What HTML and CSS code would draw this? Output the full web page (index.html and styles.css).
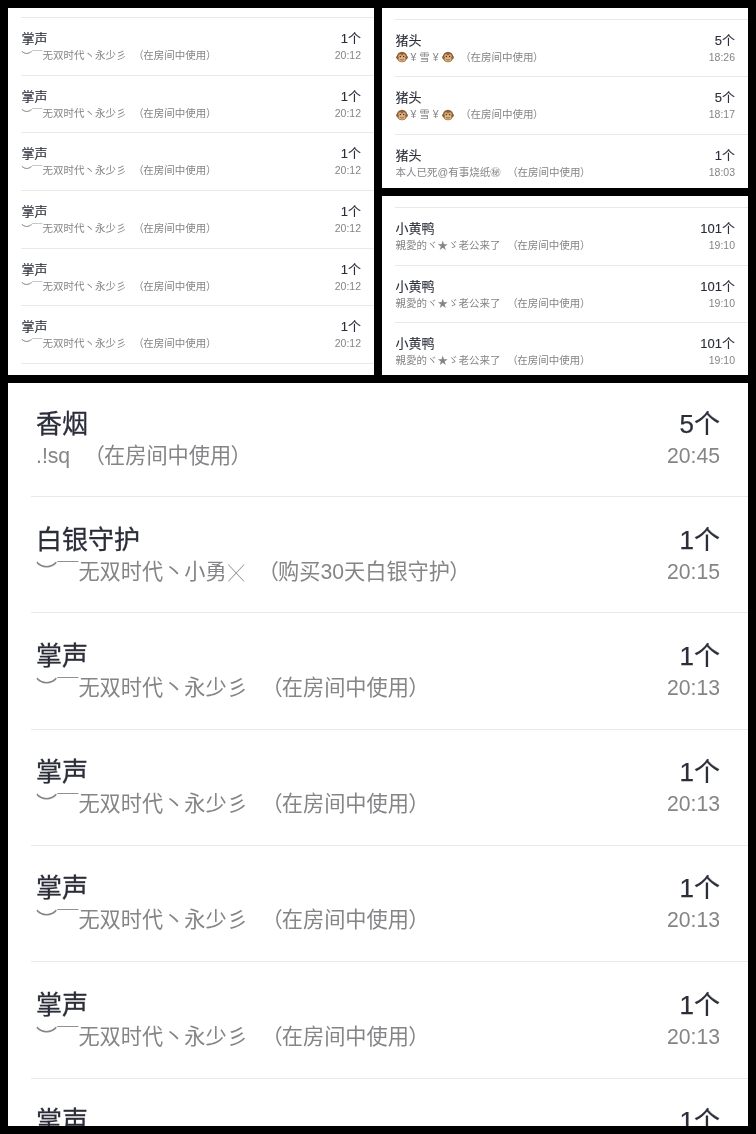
FILE: index.html
```html
<!DOCTYPE html>
<html lang="zh-CN">
<head>
<meta charset="utf-8">
<title>礼物记录</title>
<link rel="stylesheet" href="styles.css">
</head>
<body>
<svg width="0" height="0" class="defs"><defs>
<symbol id="monkey" viewBox="0 0 24 24">
<circle cx="2.8" cy="13" r="2.8" fill="#a06a3c"/><circle cx="21.2" cy="13" r="2.8" fill="#a06a3c"/>
<circle cx="12" cy="12" r="10.5" fill="#8e5f36"/>
<ellipse cx="8.3" cy="10.5" rx="3.6" ry="4" fill="#dcb081"/><ellipse cx="15.7" cy="10.5" rx="3.6" ry="4" fill="#dcb081"/>
<ellipse cx="12" cy="16.5" rx="7" ry="4.8" fill="#dcb081"/>
<circle cx="8.6" cy="11" r="1.3" fill="#3a2414"/><circle cx="15.4" cy="11" r="1.3" fill="#3a2414"/>
<path d="M8.5 17q3.5 2 7 0" fill="none" stroke="#5b3a20" stroke-width="1.1"/>
</symbol>
</defs></svg>
<main class="collage">
<section class="panel small left">
<div class="row"><div><p class="title">掌声</p><p class="sub"><span class="deco">︶￣</span>无双时代丶永少彡<span class="note">（在房间中使用）</span></p></div><div class="meta"><p class="count">1个</p><p class="time">20:12</p></div></div>
<div class="row"><div><p class="title">掌声</p><p class="sub"><span class="deco">︶￣</span>无双时代丶永少彡<span class="note">（在房间中使用）</span></p></div><div class="meta"><p class="count">1个</p><p class="time">20:12</p></div></div>
<div class="row"><div><p class="title">掌声</p><p class="sub"><span class="deco">︶￣</span>无双时代丶永少彡<span class="note">（在房间中使用）</span></p></div><div class="meta"><p class="count">1个</p><p class="time">20:12</p></div></div>
<div class="row"><div><p class="title">掌声</p><p class="sub"><span class="deco">︶￣</span>无双时代丶永少彡<span class="note">（在房间中使用）</span></p></div><div class="meta"><p class="count">1个</p><p class="time">20:12</p></div></div>
<div class="row"><div><p class="title">掌声</p><p class="sub"><span class="deco">︶￣</span>无双时代丶永少彡<span class="note">（在房间中使用）</span></p></div><div class="meta"><p class="count">1个</p><p class="time">20:12</p></div></div>
<div class="row"><div><p class="title">掌声</p><p class="sub"><span class="deco">︶￣</span>无双时代丶永少彡<span class="note">（在房间中使用）</span></p></div><div class="meta"><p class="count">1个</p><p class="time">20:12</p></div></div>
<div class="row"></div>
</section>
<section class="panel small pig">
<div class="row"><div><p class="title">猪头</p><p class="sub"><svg class="emoji"><use href="#monkey"/></svg><span class="name">¥雪¥</span><svg class="emoji"><use href="#monkey"/></svg><span class="note">（在房间中使用）</span></p></div><div class="meta"><p class="count">5个</p><p class="time">18:26</p></div></div>
<div class="row"><div><p class="title">猪头</p><p class="sub"><svg class="emoji"><use href="#monkey"/></svg><span class="name">¥雪¥</span><svg class="emoji"><use href="#monkey"/></svg><span class="note">（在房间中使用）</span></p></div><div class="meta"><p class="count">5个</p><p class="time">18:17</p></div></div>
<div class="row"><div><p class="title">猪头</p><p class="sub">本人已死@有事烧纸㊙<span class="note">（在房间中使用）</span></p></div><div class="meta"><p class="count">1个</p><p class="time">18:03</p></div></div>
</section>
<section class="panel small duck">
<div class="row"><div><p class="title">小黄鸭</p><p class="sub">親愛的ヾ★ゞ老公来了<span class="note">（在房间中使用）</span></p></div><div class="meta"><p class="count">101个</p><p class="time">19:10</p></div></div>
<div class="row"><div><p class="title">小黄鸭</p><p class="sub">親愛的ヾ★ゞ老公来了<span class="note">（在房间中使用）</span></p></div><div class="meta"><p class="count">101个</p><p class="time">19:10</p></div></div>
<div class="row"><div><p class="title">小黄鸭</p><p class="sub">親愛的ヾ★ゞ老公来了<span class="note">（在房间中使用）</span></p></div><div class="meta"><p class="count">101个</p><p class="time">19:10</p></div></div>
</section>
<section class="panel big">
<div class="row first"><div><p class="title">香烟</p><p class="sub">.!sq<span class="note">（在房间中使用）</span></p></div><div class="meta"><p class="count">5个</p><p class="time">20:45</p></div></div>
<div class="row"><div><p class="title">白银守护</p><p class="sub"><span class="deco">︶￣</span>无双时代丶小勇<span class="cross">╳</span><span class="note">（购买30天白银守护）</span></p></div><div class="meta"><p class="count">1个</p><p class="time">20:15</p></div></div>
<div class="row"><div><p class="title">掌声</p><p class="sub"><span class="deco">︶￣</span>无双时代丶永少彡<span class="note">（在房间中使用）</span></p></div><div class="meta"><p class="count">1个</p><p class="time">20:13</p></div></div>
<div class="row"><div><p class="title">掌声</p><p class="sub"><span class="deco">︶￣</span>无双时代丶永少彡<span class="note">（在房间中使用）</span></p></div><div class="meta"><p class="count">1个</p><p class="time">20:13</p></div></div>
<div class="row"><div><p class="title">掌声</p><p class="sub"><span class="deco">︶￣</span>无双时代丶永少彡<span class="note">（在房间中使用）</span></p></div><div class="meta"><p class="count">1个</p><p class="time">20:13</p></div></div>
<div class="row"><div><p class="title">掌声</p><p class="sub"><span class="deco">︶￣</span>无双时代丶永少彡<span class="note">（在房间中使用）</span></p></div><div class="meta"><p class="count">1个</p><p class="time">20:13</p></div></div>
<div class="row"><div><p class="title">掌声</p><p class="sub"><span class="deco">︶￣</span>无双时代丶永少彡<span class="note">（在房间中使用）</span></p></div><div class="meta"><p class="count">1个</p><p class="time">20:13</p></div></div>
</section>
</main>
</body>
</html>
```
FILE: styles.css
```css
* { box-sizing: border-box; }
html, body { margin: 0; height: 100%; }
body {
  background: #000;
  padding: 8px;
  overflow: hidden;
  font-family: "Liberation Sans", "Noto Sans CJK SC", sans-serif;
  color: #2b2e3a;
}
p { margin: 0; white-space: nowrap; }
.defs { display: block; height: 0; }
.collage {
  display: grid;
  grid-template-columns: 366px 366px;
  grid-template-rows: 179.5px 179.5px 743px;
  gap: 8px;
}
.panel { background: #fff; overflow: hidden; }
.left { grid-row: 1 / 3; }
.big { grid-column: 1 / 3; }

.row {
  display: flex;
  justify-content: space-between;
  border-top: 1px solid #e9e9ec;
}
.meta { text-align: right; }
.sub, .time { color: #858588; }
.title { -webkit-text-stroke: 0.3px #2b2e3a; }
.count { -webkit-text-stroke: 0.25px #2b2e3a; }
.small .title { -webkit-text-stroke: 0.12px #2b2e3a; }
.small .count { -webkit-text-stroke: 0.12px #2b2e3a; }
.note {
  margin-left: 1.1em;
  font-feature-settings: "palt";
}
.deco { vertical-align: -0.05em; line-height: 1; }
.cross { font-size: 0.75em; line-height: 1; margin-left: 0.1em; }
.name { margin: 0 0 0 3px; letter-spacing: 3px; }

.small { padding-top: 9px; }
.small.pig { padding-top: 10.5px; }
.small.duck { padding-top: 11.5px; }
.small .row {
  height: 57.67px;
  margin-left: 12.5px;
  padding: 13px 13px 0 1px;
}
.small .title, .small .count { font-size: 13px; line-height: 16px; }
.small .sub, .small .time { font-size: 10.5px; line-height: 16px; }
.emoji { width: 12px; height: 12px; vertical-align: -2.5px; }

.big .row {
  height: 116.33px;
  margin-left: 23px;
  padding: 27.5px 28px 0 5px;
}
.big .row.first {
  height: 113px;
  border-top: 0;
  padding-top: 25.5px;
}
.big .title, .big .count { font-size: 26px; line-height: 31px; }
.big .sub, .big .time { font-size: 21.2px; line-height: 31px; }
.big .row > div { filter: blur(0.5px); }
.small .row > div { filter: blur(0.35px); }
```
